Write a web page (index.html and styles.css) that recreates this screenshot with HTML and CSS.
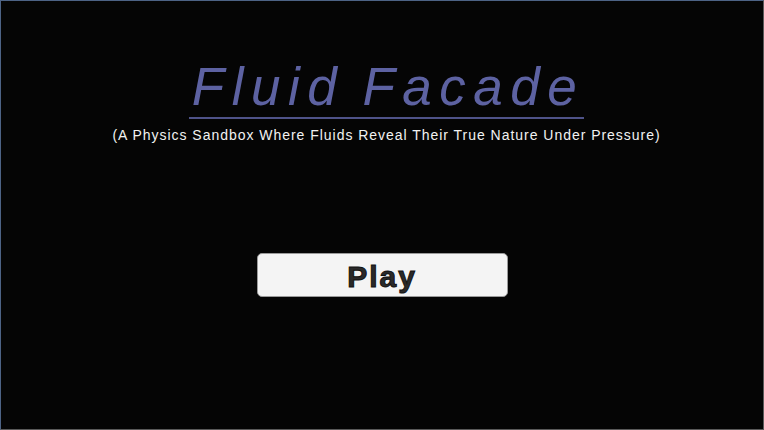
FILE: index.html
```html
<!DOCTYPE html>
<html lang="en">
  <head>
    <meta charset="UTF-8" />
    <meta name="viewport" content="width=device-width, initial-scale=1.0" />
    <title>Fluid Facade</title>
    <link rel="stylesheet" href="styles.css">
  </head>
  <body>
    <div class="screen">
      <div class="title-block">
        <h1 class="title">Fluid Facade</h1>
        <p class="subtitle">(A Physics Sandbox Where Fluids Reveal Their True Nature Under Pressure)</p>
      </div>
      <button type="button" class="play-btn">Play</button>
    </div>
  </body>
</html>
```

FILE: styles.css
```css
/* Page */
html,
body {
  margin: 0;
  padding: 0;
  background: #050505;
}

body {
  width: 764px;
  height: 430px;
  font-family: "Liberation Sans", Arial, sans-serif;
}

/* Game screen frame */
.screen {
  box-sizing: border-box;
  width: 764px;
  height: 430px;
  border-top: 1px solid #4d6385;
  border-left: 1px solid #4d6385;
  border-right: 1px solid #5a5a5a;
  border-bottom: 1px solid #5a5a5a;
  display: flex;
  flex-direction: column;
  align-items: center;
  padding-top: 56px;
}

/* Title */
.title-block {
  display: flex;
  flex-direction: column;
  align-items: center;
  padding-left: 9px;
}

.title {
  margin: 0;
  font-size: 53px;
  font-weight: normal;
  font-style: italic;
  letter-spacing: 7.5px;
  word-spacing: -4px;
  line-height: 60px;
  color: #5d62a2;
  padding: 0 0 0 3px;
  border-bottom: 2px solid #4f5389;
}

.subtitle {
  margin: 8px 0 0;
  font-size: 14px;
  letter-spacing: 0.97px;
  color: #f2f2f2;
}

/* Play button */
.play-btn {
  margin-top: 110px;
  width: 251px;
  height: 44px;
  background: #f4f4f4;
  border: 1px solid #9a9a9a;
  border-radius: 5px;
  padding: 3px 0 0;
  font-family: "Liberation Sans", Arial, sans-serif;
  font-size: 30px;
  font-weight: bold;
  letter-spacing: 2px;
  color: #2a2a2a;
  -webkit-text-stroke: 1px #111;
  cursor: pointer;
}
```
